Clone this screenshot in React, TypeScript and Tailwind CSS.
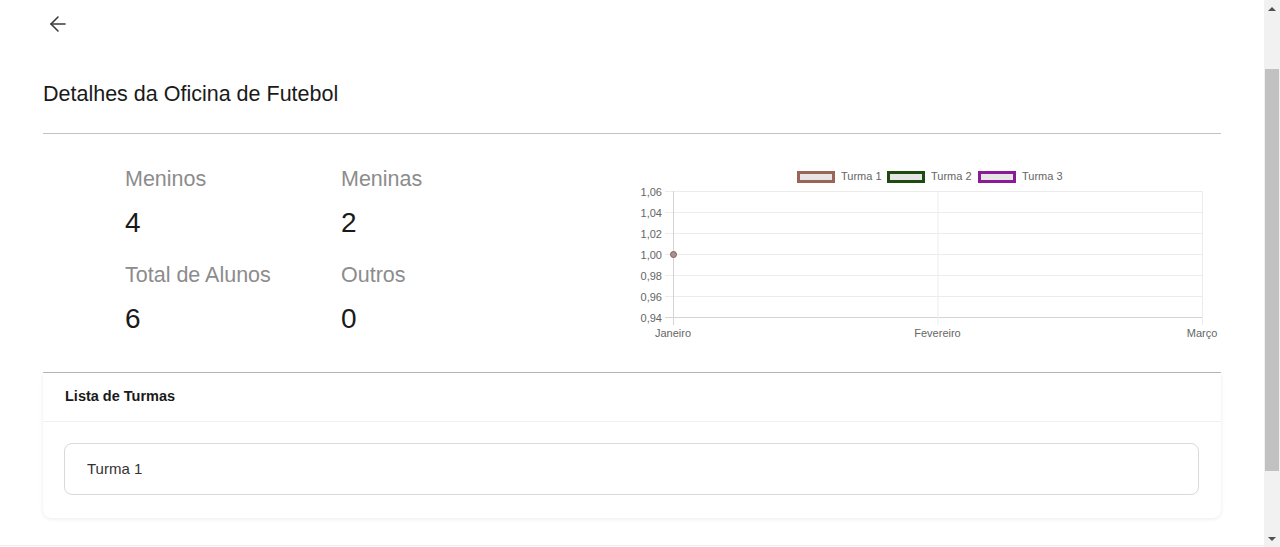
import { ArrowLeft } from "lucide-react";

const stats = [
  { label: "Meninos", value: 4 },
  { label: "Meninas", value: 2 },
  { label: "Total de Alunos", value: 6 },
  { label: "Outros", value: 0 },
];

const yTicks = ["1,06", "1,04", "1,02", "1,00", "0,98", "0,96", "0,94"];
const xTicks = [
  { label: "Janeiro", x: 42 },
  { label: "Fevereiro", x: 306.5 },
  { label: "Março", x: 571 },
];
const legend = [
  { label: "Turma 1", x: 166, color: "#9a6559" },
  { label: "Turma 2", x: 256, color: "#1f4a10" },
  { label: "Turma 3", x: 347, color: "#8a1a98" },
];

function TurmasChart() {
  return (
    <svg width="589" height="200" viewBox="0 0 589 200" className="block">
      {legend.map((l) => (
        <g key={l.label}>
          <rect x={l.x + 1.5} y={12.5} width={35} height={9} fill="#e6e4e4" stroke={l.color} strokeWidth={3} />
          <text x={l.x + 44} y={20} fontSize="11" fill="#666" fontFamily="Liberation Sans, Arial, sans-serif">
            {l.label}
          </text>
        </g>
      ))}
      {yTicks.map((t, i) => {
        const y = 31 + i * 21 + 0.5;
        return (
          <g key={t}>
            <line x1={34} x2={571} y1={y} y2={y} stroke={i === 6 ? "#d4d4d4" : "#ececec"} strokeWidth={1} />
            <text x={31} y={y + 4} fontSize="11" fill="#666" textAnchor="end" fontFamily="Liberation Sans, Arial, sans-serif">
              {t}
            </text>
          </g>
        );
      })}
      {xTicks.map((t, i) => (
        <g key={t.label}>
          <line x1={t.x + 0.5} x2={t.x + 0.5} y1={31} y2={165} stroke={i === 0 ? "#d4d4d4" : "#ececec"} strokeWidth={1} />
          <text x={t.x} y={177} fontSize="11" fill="#666" textAnchor="middle" fontFamily="Liberation Sans, Arial, sans-serif">
            {t.label}
          </text>
        </g>
      ))}
      <circle cx={42.5} cy={94.5} r={3} fill="#a89292" stroke="#8a5a52" strokeWidth={1} />
    </svg>
  );
}

function Scrollbar() {
  return (
    <div className="w-4 h-[547px] bg-[#f1f1f1] flex flex-col items-center shrink-0">
      <div className="h-[17px] w-full flex items-center justify-center">
        <div className="w-0 h-0 border-l-[4px] border-r-[4px] border-b-[4px] border-l-transparent border-r-transparent border-b-[#505050]" />
      </div>
      <div className="mt-[52px] w-[14px] h-[402px] bg-[#c1c1c1]" />
      <div className="flex-1" />
      <div className="h-[17px] w-full flex items-center justify-center">
        <div className="w-0 h-0 border-l-[4px] border-r-[4px] border-t-[4px] border-l-transparent border-r-transparent border-t-[#505050]" />
      </div>
    </div>
  );
}

export default function App() {
  return (
    <div className="flex w-[1280px] h-[547px] overflow-hidden bg-white font-['Liberation_Sans',Arial,sans-serif]">
      <div className="flex-1 h-[546px] border-b border-[#efefef] px-[43px]">
        <div className="pt-3 pl-[2.5px]">
          <ArrowLeft size={24} strokeWidth={1.6} className="text-[#3a3a3a]" />
        </div>
        <h1 className="mt-[42px] text-[21.5px] leading-8 text-[#1a1a1a]">
          Detalhes da Oficina de Futebol
        </h1>
        <div className="mt-[23px] h-px bg-[#c2c2c2]" />
        <div className="flex">
          <div className="w-[588px] pl-[82px] pt-[29px]">
            <div className="grid grid-cols-[216px_216px] gap-y-[16px]">
              {stats.map((s) => (
                <div key={s.label} className="flex flex-col">
                  <span className="text-[21.5px] leading-8 text-[#8c8c8c]">{s.label}</span>
                  <span className="mt-[8px] text-[28px] leading-10 text-[#1a1a1a]">{s.value}</span>
                </div>
              ))}
            </div>
          </div>
          <div className="flex-1 pt-[26px]">
            <TurmasChart />
          </div>
        </div>
        <div className="mt-[12px] h-px bg-[#b8b8b8]" />
        <div className="rounded-b-lg bg-white shadow-[0_1px_4px_rgba(0,0,0,0.08)]">
          <div className="h-[49px] px-[22px] flex items-center border-b border-[#f0f0f0]">
            <span className="text-[14.5px] font-bold text-[#1a1a1a]">Lista de Turmas</span>
          </div>
          <div className="pt-[21px] pb-[23px] pl-[21px] pr-[22px]">
            <div className="h-[52px] rounded-lg border border-[#d9d9d9] flex items-center px-[22px]">
              <span className="text-[15px] text-[#333]">Turma 1</span>
            </div>
          </div>
        </div>
      </div>
      <Scrollbar />
    </div>
  );
}
